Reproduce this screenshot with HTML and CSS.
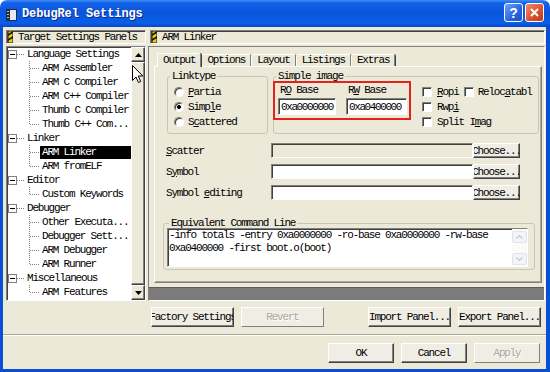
FILE: index.html
```html
<!DOCTYPE html>
<html lang="en">
<head>
    <meta charset="UTF-8">
    <meta name="viewport" content="width=device-width, initial-scale=1.0">
    <title>DebugRel Settings</title>
    <link rel="stylesheet" href="styles.css">
</head>
<body>
    <div class="window">
        <div class="titlebar">
            <svg class="app-icon" width="11" height="12" viewBox="0 0 11 12">
                <rect x="0" y="0" width="11" height="12" fill="#1b2a63"/>
                <rect x="4" y="1" width="6" height="10" fill="#e8e8f0"/>
                <rect x="1" y="2" width="2" height="1" fill="#f0c000"/>
                <rect x="1" y="5" width="2" height="1" fill="#f0c000"/>
                <rect x="1" y="8" width="2" height="1" fill="#f0c000"/>
            </svg>
            <span class="title">DebugRel Settings</span>
            <div class="caption-btns">
                <span class="cap-btn help">?</span>
                <span class="cap-btn close">
                    <svg width="11" height="11" viewBox="0 0 11 11"><path d="M2 2 L9 9 M9 2 L2 9" stroke="#fff" stroke-width="2"/></svg>
                </span>
            </div>
        </div>
        <div class="frame">
            <div class="client">
                <div class="main">
                    <div class="pane-head">
                        <svg class="head-icon" width="5" height="12" viewBox="0 0 5 12"><rect width="5" height="12" fill="#f2cf00"/><path d="M0 3 L5 0 V2 L0 5Z M0 8 L5 5 V7 L0 10Z" fill="#111"/><rect x="0" y="0" width="5" height="12" fill="none" stroke="#111" stroke-width="1"/></svg>
                        <span>Target Settings Panels</span>
                    </div>
                    <div class="pane-head right">
                        <svg class="head-icon" width="5" height="12" viewBox="0 0 5 12"><rect width="5" height="12" fill="#f2cf00"/><path d="M0 3 L5 0 V2 L0 5Z M0 8 L5 5 V7 L0 10Z" fill="#111"/><rect x="0" y="0" width="5" height="12" fill="none" stroke="#111" stroke-width="1"/></svg>
                        <span>ARM Linker</span>
                    </div>

                    <div class="tree">
                        <ul class="tree-list">
                            <li class="node"><span class="expander"></span><span class="dash"></span><span class="label">Language Settings</span></li>
                            <li class="leaf"><span class="branch"></span><span class="label">ARM Assembler</span></li>
                            <li class="leaf"><span class="branch"></span><span class="label">ARM C Compiler</span></li>
                            <li class="leaf"><span class="branch"></span><span class="label">ARM C++ Compiler</span></li>
                            <li class="leaf"><span class="branch"></span><span class="label">Thumb C Compiler</span></li>
                            <li class="leaf last"><span class="branch"></span><span class="label">Thumb C++ Com...</span></li>
                            <li class="node"><span class="expander"></span><span class="dash"></span><span class="label">Linker</span></li>
                            <li class="leaf"><span class="branch"></span><span class="label sel">ARM Linker</span></li>
                            <li class="leaf last"><span class="branch"></span><span class="label">ARM fromELF</span></li>
                            <li class="node"><span class="expander"></span><span class="dash"></span><span class="label">Editor</span></li>
                            <li class="leaf last"><span class="branch"></span><span class="label">Custom Keywords</span></li>
                            <li class="node"><span class="expander"></span><span class="dash"></span><span class="label">Debugger</span></li>
                            <li class="leaf"><span class="branch"></span><span class="label">Other Executa...</span></li>
                            <li class="leaf"><span class="branch"></span><span class="label">Debugger Sett...</span></li>
                            <li class="leaf"><span class="branch"></span><span class="label">ARM Debugger</span></li>
                            <li class="leaf last"><span class="branch"></span><span class="label">ARM Runner</span></li>
                            <li class="node"><span class="expander"></span><span class="dash"></span><span class="label">Miscellaneous</span></li>
                            <li class="leaf last"><span class="branch"></span><span class="label">ARM Features</span></li>
                        </ul>
                        <div class="vscroll">
                            <span class="sb-btn"><svg width="7" height="4" viewBox="0 0 7 4"><path d="M3.5 0 L7 4 H0Z" fill="#000"/></svg></span>
                            <span class="sb-thumb"></span>
                            <span class="sb-btn"><svg width="7" height="4" viewBox="0 0 7 4"><path d="M0 0 H7 L3.5 4Z" fill="#000"/></svg></span>
                        </div>
                        <svg class="cursor" width="12" height="19" viewBox="0 0 12 19">
                            <path d="M0.5 0.5 V15.5 L4 12 L6.5 17.5 L8.7 16.5 L6.3 11 H10.8 Z" fill="#fff" stroke="#000" stroke-width="1"/>
                        </svg>
                    </div>

                    <div class="panel">
                        <div class="tabs">
                            <span class="tab active">Output</span>
                            <span class="tab">Options</span>
                            <span class="tab">Layout</span>
                            <span class="tab">Listings</span>
                            <span class="tab">Extras</span>
                        </div>
                        <div class="tab-page">
                            <div class="top-row">
                                <fieldset class="group linktype">
                                    <legend>Linktype</legend>
                                    <div class="radio first"><span class="radio-dot"></span><span><u>P</u>artia</span></div>
                                    <div class="radio"><span class="radio-dot on"></span><span>Simp<u>l</u>e</span></div>
                                    <div class="radio"><span class="radio-dot"></span><span>S<u>c</u>attered</span></div>
                                </fieldset>
                                <fieldset class="group simple">
                                    <legend>Simple image</legend>
                                    <div class="simple-row">
                                        <div class="mark">
                                            <div class="base-field">
                                                <span class="base-label">R<u>O</u> Base</span>
                                                <span class="edit ro">0xa0000000</span>
                                            </div>
                                            <div class="base-field">
                                                <span class="base-label">R<u>W</u> Base</span>
                                                <span class="edit rw">0xa0400000</span>
                                            </div>
                                        </div>
                                        <div class="checks">
                                            <div class="check-row"><span class="check"></span><span><u>R</u>opi</span><span class="check gap"></span><span>Reloc<u>a</u>tabl</span></div>
                                            <div class="check-row"><span class="check"></span><span>Rwp<u>i</u></span></div>
                                            <div class="check-row"><span class="check"></span><span>Split I<u>m</u>ag</span></div>
                                        </div>
                                    </div>
                                </fieldset>
                            </div>

                            <div class="path-rows">
                                <span class="path-label"><u>S</u>catter</span>
                                <span class="edit path disabled"></span>
                                <span class="btn choose">Choose...</span>

                                <span class="path-label">S<u>y</u>mbol</span>
                                <span class="edit path"></span>
                                <span class="btn choose">Choose...</span>

                                <span class="path-label">Symbol <u>e</u>diting</span>
                                <span class="edit path"></span>
                                <span class="btn choose">Choose...</span>
                            </div>

                            <fieldset class="group equiv">
                                <legend>Equivalent Command Line</legend>
                                <div class="cmd-box">
                                    <div class="cmd-text">-info totals -entry 0xa0000000 -ro-base 0xa0000000 -rw-base 0xa0400000 -first boot.o(boot)</div>
                                    <div class="cmd-scroll">
                                        <span class="cs-btn"><svg width="7" height="4" viewBox="0 0 7 4"><path d="M0.5 3.5 L3.5 0.5 L6.5 3.5" fill="none" stroke="#c3c9d4" stroke-width="1.2"/></svg></span>
                                        <span class="cs-btn"><svg width="7" height="4" viewBox="0 0 7 4"><path d="M0.5 0.5 L3.5 3.5 L6.5 0.5" fill="none" stroke="#c3c9d4" stroke-width="1.2"/></svg></span>
                                    </div>
                                </div>
                            </fieldset>
                        </div>
                        <div class="panel-foot"></div>
                    </div>

                    <div class="panel-buttons">
                        <span class="btn wide">Factory Settings</span>
                        <span class="btn wide off">Revert</span>
                        <span class="spacer"></span>
                        <span class="btn wide">Import Panel...</span>
                        <span class="btn wide">Export Panel...</span>
                    </div>
                </div>

                <div class="separator"></div>

                <div class="dialog-buttons">
                    <span class="btn ok">OK</span>
                    <span class="btn ok">Cancel</span>
                    <span class="btn ok off">Apply</span>
                </div>
            </div>
        </div>
    </div>
</body>
</html>
```

FILE: styles.css
```css
* {
    box-sizing: border-box;
}
body {
    margin: 0;
    background: #fff;
    font-family: "Liberation Mono", monospace;
    font-size: 11px;
    letter-spacing: -1.2px;
    color: #000;
}

.window {
    width: 550px;
    height: 372px;
    display: flex;
    flex-direction: column;
    border-radius: 7px 7px 0 0;
    overflow: hidden;
}

/* title bar */
.titlebar {
    height: 27px;
    flex: none;
    display: flex;
    align-items: center;
    padding: 0 6px;
    background: linear-gradient(#3d8ef7 0, #1462e8 3px, #0a56dd 45%, #0b5de6 85%, #0747cb 100%);
}
.app-icon {
    flex: none;
    margin-top: 2px;
}
.title {
    margin-left: 5px;
    font-size: 12px;
    font-weight: bold;
    letter-spacing: -0.1px;
    color: #fff;
    text-shadow: 1px 1px 0 #0b2a8a;
}
.caption-btns {
    margin-left: auto;
    display: flex;
    gap: 2px;
    margin-top: -2px;
}
.cap-btn {
    width: 19px;
    height: 19px;
    border: 1px solid #fff;
    border-radius: 3px;
    display: flex;
    align-items: center;
    justify-content: center;
    color: #fff;
    font-family: "Liberation Sans", sans-serif;
    font-weight: bold;
    font-size: 14px;
    letter-spacing: 0;
}
.cap-btn.help {
    background: linear-gradient(135deg, #6aa3f8, #2a64e0 60%, #1d4fc8);
}
.cap-btn.close {
    background: linear-gradient(135deg, #f08a66, #d9512b 60%, #c23b17);
}

.frame {
    flex: 1;
    padding: 0 4px 3px 3px;
    background: #0a4fd6;
}
.client {
    height: 100%;
    background: #ece9d8;
    padding: 3px 1px 0 3px;
}

.main {
    display: grid;
    grid-template-columns: 140px 397px;
    grid-template-rows: 14px 255px auto;
    column-gap: 2px;
    row-gap: 2px;
}

/* pane headers */
.pane-head {
    display: flex;
    align-items: center;
    gap: 5px;
    padding-left: 1px;
    border: 1px solid;
    border-color: #808080 #fff #fff #808080;
    box-shadow: inset 1px 1px 0 #404040;
    white-space: nowrap;
    overflow: hidden;
}
.pane-head.right {
    margin-left: 2px;
}
.head-icon {
    flex: none;
}

/* tree */
.tree {
    display: flex;
    position: relative;
    background: #fff;
    border: 1px solid;
    border-color: #808080 #fff #fff #808080;
    box-shadow: inset 1px 1px 0 #404040;
}
.tree-list {
    flex: 1;
    list-style: none;
    margin: 0;
    padding: 0;
}
.tree-list li {
    height: 14px;
    display: flex;
    align-items: center;
    white-space: nowrap;
}
.expander {
    flex: none;
    width: 9px;
    height: 9px;
    margin-left: 1px;
    border: 1px solid #808080;
    background: linear-gradient(#000, #000) center / 5px 1px no-repeat, #fff;
}
.dash {
    flex: none;
    width: 7px;
    height: 1px;
    background: repeating-linear-gradient(to right, #808080 0 1px, transparent 1px 2px);
}
.node .label {
    margin-left: 3px;
}
.branch {
    flex: none;
    width: 11px;
    height: 14px;
    margin-left: 22px;
    background:
        repeating-linear-gradient(to right, #808080 0 1px, transparent 1px 2px) 1px 7px / 9px 1px no-repeat,
        repeating-linear-gradient(#808080 0 1px, transparent 1px 2px) 0 0 / 1px 14px no-repeat;
}
.last .branch {
    background-size: 9px 1px, 1px 8px;
}
.leaf .label {
    flex: 1;
    padding: 0 2px;
    line-height: 13px;
}
.leaf .label.sel {
    background: #000;
    color: #fff;
}

.vscroll {
    width: 14px;
    flex: none;
    display: flex;
    flex-direction: column;
    background: #f3f1e9;
}
.sb-btn {
    height: 15px;
    flex: none;
    display: flex;
    align-items: center;
    justify-content: center;
    background: #ece9d8;
    border: 1px solid;
    border-color: #fff #404040 #404040 #fff;
    box-shadow: inset -1px -1px 0 #808080;
}
.sb-thumb {
    flex: 1;
    background: #ece9d8;
    border: 1px solid;
    border-color: #fff #404040 #404040 #fff;
    box-shadow: inset -1px -1px 0 #808080;
}
.cursor {
    position: absolute;
    left: 125px;
    top: 18px;
}

/* right panel */
.panel {
    display: flex;
    flex-direction: column;
    padding: 6px 2px 0 5px;
    border: 1px solid;
    border-color: #808080 #fff #fff #808080;
}
.tabs {
    height: 13px;
    flex: none;
    display: flex;
    align-items: flex-end;
    padding-left: 3px;
}
.tab {
    height: 12px;
    padding: 0 5px;
    line-height: 11px;
    border-top: 1px solid #fff;
    border-left: 1px solid #fff;
    border-right: 1px solid #808080;
    box-shadow: 1px 0 0 #404040;
    border-radius: 2px 2px 0 0;
    white-space: nowrap;
}
.tab.active {
    height: 14px;
    margin-bottom: -1px;
    line-height: 13px;
    background: #ece9d8;
    position: relative;
    z-index: 1;
}
.tab-page {
    flex: 1;
    padding: 3px 0 0 12px;
    border: 1px solid;
    border-color: #fff #808080 #808080 #fff;
    box-shadow: inset -1px -1px 0 #aca899;
}
.panel-foot {
    height: 13px;
    flex: none;
    margin: 4px -2px 0 -5px;
    background: #7b7b7b;
    border-top: 1px solid #5c5c5c;
}

.group {
    margin: 0;
    padding: 0;
    min-width: 0;
    border: 1px solid #c9c6b5;
    border-radius: 3px;
}
.group legend {
    padding: 0 2px;
    margin-left: 2px;
    line-height: 12px;
}
.top-row {
    display: flex;
    gap: 5px;
}
.linktype {
    width: 101px;
    height: 64px;
}
.simple {
    width: 266px;
    height: 64px;
}
.radio {
    height: 15px;
    display: flex;
    align-items: center;
    gap: 4px;
    padding-left: 6px;
}
.radio.first {
    margin-top: 2px;
}
.radio-dot {
    width: 10px;
    height: 10px;
    flex: none;
    border-radius: 50%;
    border: 1px solid;
    border-color: #808080 #fff #fff #808080;
    box-shadow: inset 1px 1px 0 #404040;
    background: #fff;
}
.radio-dot.on {
    background: radial-gradient(circle, #000 0 1.8px, #fff 2.2px);
}

.simple-row {
    display: flex;
    align-items: flex-start;
}
.mark {
    width: 138px;
    height: 39px;
    margin: -1px 0 0 -1px;
    display: flex;
    gap: 10px;
    padding: 1px 0 0 3px;
    border: 2px solid #e3211d;
}
.base-field {
    display: flex;
    flex-direction: column;
}
.base-label {
    padding-left: 2px;
    line-height: 12px;
}
.edit {
    display: flex;
    align-items: center;
    padding-left: 2px;
    background: #fff;
    border: 1px solid;
    border-color: #808080 #fff #fff #808080;
    box-shadow: inset 1px 1px 0 #404040;
    white-space: nowrap;
    overflow: hidden;
}
.edit.ro,
.edit.rw {
    height: 17px;
    margin-top: 2px;
    letter-spacing: -1.4px;
}
.edit.ro {
    width: 58px;
}
.edit.rw {
    width: 61px;
}
.checks {
    margin: 2px 0 0 11px;
}
.check-row {
    height: 15px;
    display: flex;
    align-items: center;
    gap: 5px;
    white-space: nowrap;
}
.check {
    width: 10px;
    height: 10px;
    flex: none;
    background: #fff;
    border: 1px solid;
    border-color: #808080 #fff #fff #808080;
    box-shadow: inset 1px 1px 0 #404040;
}
.check.gap {
    margin-right: -1px;
}

.path-rows {
    display: grid;
    grid-template-columns: 105px 202px 47px;
    grid-auto-rows: 15px;
    row-gap: 6px;
    margin: 9px 0 0 -1px;
    align-items: center;
}
.edit.path {
    height: 15px;
}
.edit.path.disabled {
    background: #ece9d8;
}

.equiv {
    width: 372px;
    height: 53px;
    margin: 17px 0 0 -4px;
    padding: 0 6px 0 3px;
}
.cmd-box {
    height: 39px;
    margin-top: -1px;
    display: flex;
    background: #fff;
    border: 1px solid;
    border-color: #808080 #fff #fff #808080;
    box-shadow: inset 1px 1px 0 #404040;
}
.cmd-text {
    flex: 1;
    padding: 0 2px 0 1px;
    line-height: 13px;
}
.cmd-scroll {
    width: 15px;
    flex: none;
    display: flex;
    flex-direction: column;
    justify-content: space-between;
    padding: 2px 0 1px;
    background: #fbfbf9;
}
.cs-btn {
    height: 12px;
    display: flex;
    align-items: center;
    justify-content: center;
    background: #f3f4f7;
    border: 1px solid #e1e4ea;
    border-radius: 2px;
}

/* buttons */
.btn {
    display: flex;
    align-items: center;
    justify-content: center;
    white-space: nowrap;
    overflow: hidden;
    background: #efede4;
    border: 1px solid;
    border-color: #fff #404040 #404040 #fff;
    box-shadow: inset -1px -1px 0 #808080;
}
.btn.choose {
    height: 15px;
}
.btn.off {
    color: #aca899;
    text-shadow: 1px 1px 0 #fff;
    border-color: #fff #808080 #808080 #fff;
    box-shadow: none;
}
.panel-buttons {
    grid-column: 2;
    display: flex;
    gap: 7px;
    margin-top: 4px;
    padding: 0 4px 0 3px;
}
.btn.wide {
    width: 83px;
    height: 20px;
}
.spacer {
    flex: 1;
}
.separator {
    height: 2px;
    margin: 7px -1px 0 -3px;
    border-top: 1px solid #aca899;
    border-bottom: 1px solid #fff;
}
.dialog-buttons {
    display: flex;
    justify-content: flex-end;
    gap: 7px;
    margin-top: 7px;
    padding-right: 5px;
}
.btn.ok {
    width: 66px;
    height: 20px;
}
```
